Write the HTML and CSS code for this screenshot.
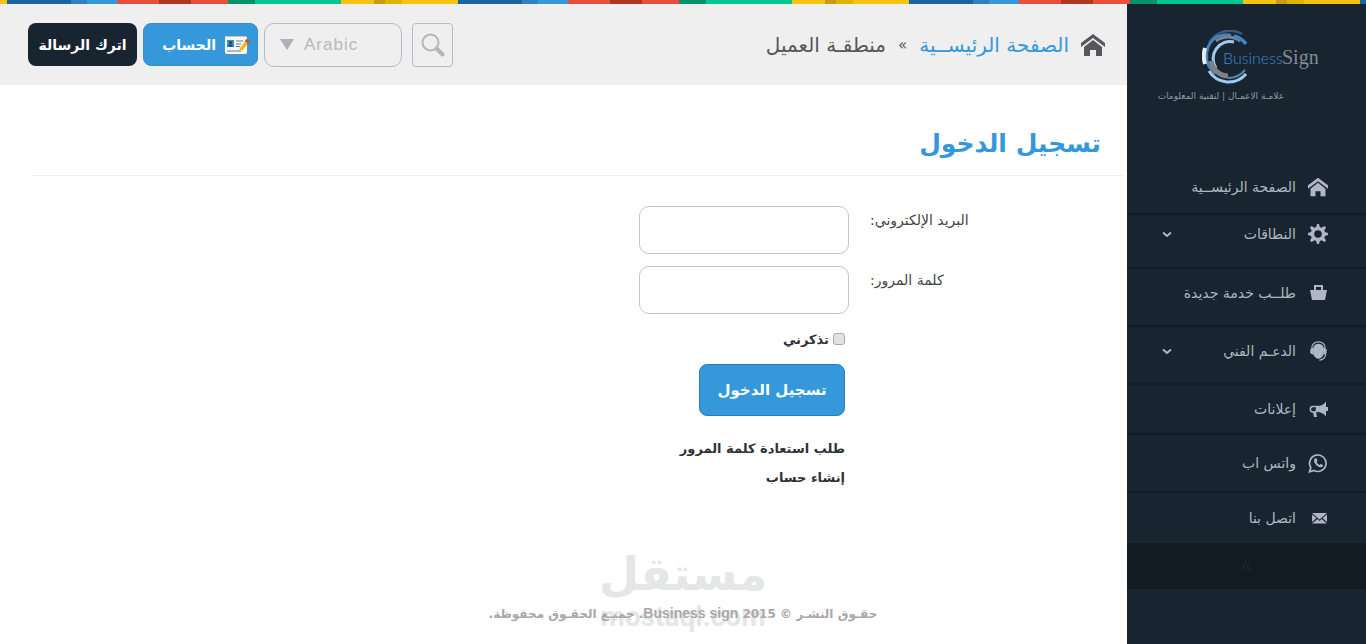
FILE: index.html
```html
<!DOCTYPE html>
<html lang="ar" dir="rtl">
<head>
    <meta charset="UTF-8">
    <meta name="viewport" content="width=device-width, initial-scale=1.0">
    <title>تسجيل الدخول</title>
    <link rel="stylesheet" href="styles.css">
</head>
<body>
    <div class="stripe"></div>
    <div class="layout">
        <aside class="sidebar">
            <div class="brand">
                <svg class="logo" width="116" height="54" viewBox="0 0 116 54" direction="ltr" fill="none" aria-label="Business Sign">
                    <path d="M7 13 A24 24 0 0 1 40 4" stroke="#3d5878" stroke-width="2.5"/>
                    <path d="M13 44 A24 24 0 0 1 17 5" stroke="#6d747d" stroke-width="2.5"/>
                    <path d="M8 38 A21 21 0 0 1 29 5" stroke="#3b86cc" stroke-width="2.5"/>
                    <path d="M14 11 A20 20 0 0 1 38 11" stroke="#7c828a" stroke-width="3"/>
                    <path d="M32 6 A22 22 0 0 1 44 14" stroke="#3b86cc" stroke-width="3.5"/>
                    <path d="M32 12 A17 17 0 0 0 14 38" stroke="#9ccaf2" stroke-width="3"/>
                    <path d="M9 31 A18 18 0 0 0 26 46" stroke="#7c828a" stroke-width="5"/>
                    <path d="M7 41 A23 23 0 0 0 44 44" stroke="#9ccaf2" stroke-width="3"/>
                    <path d="M26 48 A22 22 0 0 0 43 40" stroke="#5d86b0" stroke-width="2"/>
                    <path d="M3 18 A28 28 0 0 0 3 34" stroke="#e6eef6" stroke-width="4"/>
                    <text class="logo-business" x="21" y="34">Business</text>
                    <text class="logo-sign" x="80" y="34">Sign</text>
                </svg>
                <p class="tagline">علامـة الاعمـال | لتقنية المعلومات</p>
            </div>
            <nav class="menu">
                <a href="#" class="item home">
                    <svg class="icon" viewBox="0 0 24 22"><path d="M12 0 24 9V13L12 4 0 13V9Z"/><path d="M12 6 21 13V22H15V16H9V22H3V13Z"/></svg>
                    <span>الصفحة الرئيســية</span>
                </a>
                <a href="#" class="item domains">
                    <svg class="icon" viewBox="0 0 20 20"><path fill-rule="evenodd" d="M9 0h2l.8 3 1.700.7L16.500 2 18 3.500l-1.700 3 .7 1.500 3 1v2l-3 1-.7 1.500 1.700 3-1.500 1.500-3-1.700-1.700.7-.8 3H9l-.8-3-1.700-.7-3 1.700L2 16.500l1.700-3L3 12l-3-1V9l3-1 .7-1.500L2 3.500 3.500 2l3 1.700L8.200 3ZM10 6.200a3.800 3.800 0 1 0 0 7.600 3.800 3.800 0 0 0 0-7.600Z"/></svg>
                    <span>النطاقات</span>
                    <svg class="chevron" viewBox="0 0 10 7"><path d="M1 1.500 5 5 9 1.500"/></svg>
                </a>
                <a href="#" class="item tall raised">
                    <svg class="icon" viewBox="0 0 20 20"><path fill-rule="evenodd" d="M6 2h9v5h4l-2 10H4L2 7h4ZM8 4v3h5V4Z"/></svg>
                    <span>طلــب خدمة جديدة</span>
                </a>
                <a href="#" class="item tall raised">
                    <svg class="icon" viewBox="0 0 20 22"><path d="M10.500 3c4 0 6 3 6 7.500s-2 9-6 9-6-4.500-6-9S6.500 3 10.500 3Z"/><path d="M5 7 1.500 9v4.500L5 15.500ZM16 7l3.500 2v4.500L16 15.500Z"/><path d="M3 8C3.500 3 6.500 1 10.500 1S17.500 3 18 8M18.500 14c0 4-3 7-7 7" fill="none" stroke="currentColor" stroke-width="1.300"/></svg>
                    <span>الدعـم الفني</span>
                    <svg class="chevron" viewBox="0 0 10 7"><path d="M1 1.500 5 5 9 1.500"/></svg>
                </a>
                <a href="#" class="item">
                    <svg class="icon" viewBox="0 0 20 20"><path d="M9 7c4 0 7-1.500 9-4.500v15c-2-3-5-4.500-9-4.500Z"/><path d="M18 8h2v4h-2ZM5 13h3l1 5H6Z"/><path d="M9 7.500H5a2.700 2.700 0 0 0 0 5.400h3Z" fill="none" stroke="currentColor" stroke-width="1.500"/></svg>
                    <span>إعلانات</span>
                </a>
                <a href="#" class="item tall">
                    <svg class="icon" viewBox="0 0 20 20"><path d="M1.500 18.800 2.800 14.500A8.200 8.200 0 1 1 6 17.500Z" fill="none" stroke="currentColor" stroke-width="1.700"/><path d="M7.500 5.200c-2.300 1-1.800 4.300.7 6.800s5.500 3.200 6.700 1c.4-.9 0-1.200-2-2.100l-1.300 1.200c-1.300-.6-2.300-1.600-3-3.100l.9-1.300c-.6-1.900-.9-2.500-2-2.500Z"/></svg>
                    <span>واتس اب</span>
                </a>
                <a href="#" class="item">
                    <svg class="icon" viewBox="0 0 20 20"><path d="M4 5h15l-7.500 6.500ZM4 6.500 8.500 10 4 14ZM19 6.500 14.500 10 19 14ZM9.500 11l2 2 2-2L19 15.500H4Z"/></svg>
                    <span>اتصل بنا</span>
                </a>
            </nav>
            <button type="button" class="collapse" aria-label="طي القائمة">
                <svg viewBox="0 0 10 12"><path d="M5 1 1 6l4 5M9 1 5 6l4 5"/></svg>
            </button>
        </aside>

        <main class="main">
            <header class="topbar">
                <div class="crumbs">
                    <svg class="home-icon" viewBox="0 0 24 22"><path d="M12 0 24 9V13L12 4 0 13V9Z"/><path d="M12 6 21 13V22H15V16H9V22H3V13Z"/></svg>
                    <a href="#">الصفحة الرئيســية</a>
                    <span class="sep">»</span>
                    <span>منطقـة العميل</span>
                </div>
                <div class="tools">
                    <button type="button" class="search" aria-label="بحث">
                        <svg viewBox="0 0 24 24"><circle cx="9.500" cy="9.500" r="8"/><path d="m15.500 15.500 6 6" stroke-width="4"/></svg>
                    </button>
                    <div class="language">
                        <svg viewBox="0 0 14 11"><path d="M0 0h14L7 11Z"/></svg>
                        <select aria-label="اللغة">
                            <option>Arabic</option>
                        </select>
                    </div>
                    <button type="button" class="btn btn-blue">
                        <svg class="card-icon" viewBox="0 0 26 22">
                            <rect x="1" y="2" width="22" height="18" rx="2" fill="#f4f8fb"/>
                            <path d="M0 20.500h25" stroke="#5b8fb8"/>
                            <path d="M1 2.500h21" stroke="#d9c48d"/>
                            <path d="M3 6h7v7H3Z" fill="#3d8ecb"/>
                            <circle cx="6.500" cy="8.500" r="1.500" fill="#17456b"/>
                            <path d="M4 12.500c1-3 4-3 5 0Z" fill="#17456b"/>
                            <path d="M12 7h7M12 10h5M12 12.500h4M3 17h14" stroke="#6b7b88" fill="none"/>
                            <path d="m16 14 6-8 3 2-6 8-4 1Z" fill="#f3b91c"/>
                            <path d="m21 7 1-2 4 2-2 3Z" fill="#d8492e"/>
                        </svg>
                        الحساب
                    </button>
                    <button type="button" class="btn btn-dark">اترك الرسالة</button>
                </div>
            </header>

            <section class="content">
                <h1>تسجيل الدخول</h1>
                <form class="login">
                    <label for="email">البريد الإلكتروني:</label>
                    <input type="text" id="email">

                    <label for="password">كلمة المرور:</label>
                    <input type="password" id="password">

                    <div class="actions">
                        <div class="remember">
                            <input type="checkbox" id="remember">
                            <label for="remember">تذكرني</label>
                        </div>
                        <button type="submit" class="submit">تسجيل الدخول</button>
                        <a href="#">طلب استعادة كلمة المرور</a>
                        <a href="#">إنشاء حساب</a>
                    </div>
                </form>
            </section>

            <footer class="footer">
                <div class="watermark">
                    <span class="mark">مستقل</span>
                    <span class="domain">mostaql.com</span>
                </div>
                <p>حقـوق النشـر © 2015 <span class="company">Business sign</span>. جميـع الحقـوق محفوظة.</p>
            </footer>
        </main>
    </div>
</body>
</html>
```

FILE: styles.css
```css
* {
    box-sizing: border-box;
}
body {
    margin: 0;
    min-height: 100vh;
    display: flex;
    flex-direction: column;
    background: #fff;
    color: #333;
    font-family: "DejaVu Sans", sans-serif;
    font-size: 13px;
}
a {
    color: inherit;
    text-decoration: none;
}
button, select, input {
    font-family: inherit;
}
button {
    cursor: pointer;
}
.stripe {
    height: 4px;
    background: repeating-linear-gradient(to right,
        #1a659e 0 64px, #2f80c4 64px 80px, #3498db 80px 110px,
        #ea4d3c 110px 152px, #b13429 152px 184px, #ea4d3c 184px 221px,
        #05946a 221px 248px, #00c890 248px 334px,
        #f4c40f 334px 367px, #c99c14 367px 378px, #e0b300 378px 395px, #f4c40f 395px 451px);
    background-position: 7px 0;
    background-size: 451px 4px;
}
.layout {
    flex: 1;
    display: flex;
}

/* sidebar */
.sidebar {
    width: 239px;
    flex-shrink: 0;
    background: #182430;
    color: #afb7c2;
}
.brand {
    height: 157px;
    padding-top: 26px;
}
.logo {
    display: block;
    margin-right: 48px;
}
.logo-business {
    font: 300 16px Lato, sans-serif;
    fill: #3b8ad2;
}
.logo-sign {
    font: 20px "Liberation Serif", serif;
    fill: #858a91;
}
.tagline {
    margin: 4px 82px 0 0;
    font-size: 9px;
    line-height: 16px;
    white-space: nowrap;
    color: #9198a1;
}
.item {
    display: flex;
    align-items: center;
    gap: 12px;
    height: 50px;
    padding: 0 38px 0 35px;
    border-bottom: 2px solid #131b28;
    font-size: 14px;
    white-space: nowrap;
}
.item.home {
    height: 54px;
}
.item.domains {
    height: 54px;
    padding-bottom: 14px;
}
.item.tall {
    height: 58px;
}
.item.raised {
    padding-bottom: 8px;
}
.item:last-child {
    border-bottom: 0;
}
.icon {
    width: 20px;
    height: 20px;
    fill: currentColor;
}
.chevron {
    width: 10px;
    height: 7px;
    margin-right: auto;
    fill: none;
    stroke: currentColor;
    stroke-width: 2;
}
.collapse {
    display: flex;
    align-items: center;
    justify-content: center;
    width: 100%;
    height: 46px;
    border: 0;
    background: #121a22;
}
.collapse svg {
    width: 10px;
    height: 12px;
    fill: none;
    stroke: #1d2c48;
}

/* top bar */
.main {
    flex: 1;
    display: flex;
    flex-direction: column;
}
.topbar {
    display: flex;
    justify-content: space-between;
    align-items: center;
    height: 81px;
    padding: 0 22px 0 28px;
    background: #efefef;
}
.crumbs {
    display: flex;
    align-items: center;
    gap: 12px;
    font-size: 20px;
    line-height: 24px;
    color: #55575c;
}
.crumbs a {
    color: #3498db;
}
.sep {
    font-size: 15px;
}
.home-icon {
    width: 24px;
    height: 22px;
    fill: #55575c;
}
.tools {
    display: flex;
    align-items: center;
    gap: 6px;
}
.search {
    display: flex;
    align-items: center;
    justify-content: center;
    width: 41px;
    height: 44px;
    margin-left: 4px;
    padding: 0;
    border: 1px solid #b4bacb;
    border-radius: 4px;
    background: none;
}
.search svg {
    width: 24px;
    height: 24px;
    fill: none;
    stroke: #b8b4b5;
    stroke-width: 2;
    stroke-linecap: round;
}
.language {
    direction: ltr;
    display: flex;
    align-items: center;
    gap: 10px;
    width: 138px;
    height: 44px;
    padding: 0 15px;
    border: 1px solid #b4bacb;
    border-radius: 10px;
}
.language svg {
    width: 14px;
    height: 11px;
    fill: #abb0ba;
}
.language select {
    flex: 1;
    appearance: none;
    padding: 0;
    border: 0;
    background: none;
    font-family: "Liberation Sans", sans-serif;
    font-size: 17px;
    letter-spacing: 1px;
    color: #bab8ba;
}
.btn {
    display: flex;
    align-items: center;
    justify-content: center;
    gap: 8px;
    height: 43px;
    border-radius: 8px;
    color: #fff;
    font-size: 14px;
    font-weight: bold;
    white-space: nowrap;
}
.btn-blue {
    justify-content: flex-start;
    width: 115px;
    padding: 0 7px;
    border: 1px solid #3d8cc6;
    background: #3498db;
}
.btn-dark {
    width: 109px;
    border: 0;
    background: #182430;
}
.card-icon {
    width: 26px;
    height: 22px;
}

/* login form */
.content {
    padding: 42px 4px 0 32px;
}
h1 {
    margin: 0 0 30px;
    padding: 0 22px 14px 0;
    border-bottom: 1px solid #eee;
    font-size: 25px;
    line-height: 34px;
    color: #3498db;
}
.login {
    display: grid;
    grid-template-columns: 253px 210px;
    gap: 12px 21px;
    color: #444;
}
.login > label {
    padding-top: 4px;
    text-align: left;
    font-size: 14px;
    line-height: 20px;
}
.login > input {
    height: 48px;
    padding: 0 12px;
    border: 1px solid #c3c3d8;
    border-radius: 10px;
    background: #fff;
    font-size: 14px;
}
.actions {
    grid-column: 2;
    display: flex;
    flex-direction: column;
    align-items: flex-start;
    padding: 0 4px;
    color: #2f3238;
    font-weight: bold;
    white-space: nowrap;
}
.actions a {
    line-height: 29px;
}
.remember {
    display: flex;
    align-items: center;
    gap: 4px;
    height: 26px;
}
.remember input {
    appearance: none;
    width: 12px;
    height: 12px;
    margin: 0;
    border: 1px solid #aaa;
    border-radius: 3px;
    background: #e2e2e2;
}
.submit {
    width: 146px;
    height: 52px;
    margin: 12px 0 18px;
    border: 1px solid #2980b9;
    border-radius: 8px;
    background: #3498db;
    color: #fff;
    font-size: 15px;
    font-weight: bold;
}

/* footer */
.footer {
    position: relative;
    margin-top: auto;
    padding: 20px 0 20px 239px;
    text-align: center;
    color: #aca7a8;
    font-size: 12px;
    font-weight: bold;
}
.footer p {
    position: relative;
    margin: 0;
    line-height: 20px;
}
.company {
    font-family: "Liberation Sans", sans-serif;
    font-size: 14px;
}
.watermark {
    position: absolute;
    right: 0;
    left: 239px;
    bottom: 10px;
    display: flex;
    flex-direction: column;
    color: #e4e7e6;
}
.mark {
    font-size: 46px;
    line-height: 52px;
}
.domain {
    font-family: Roboto, sans-serif;
    font-size: 28px;
    line-height: 34px;
}
```
